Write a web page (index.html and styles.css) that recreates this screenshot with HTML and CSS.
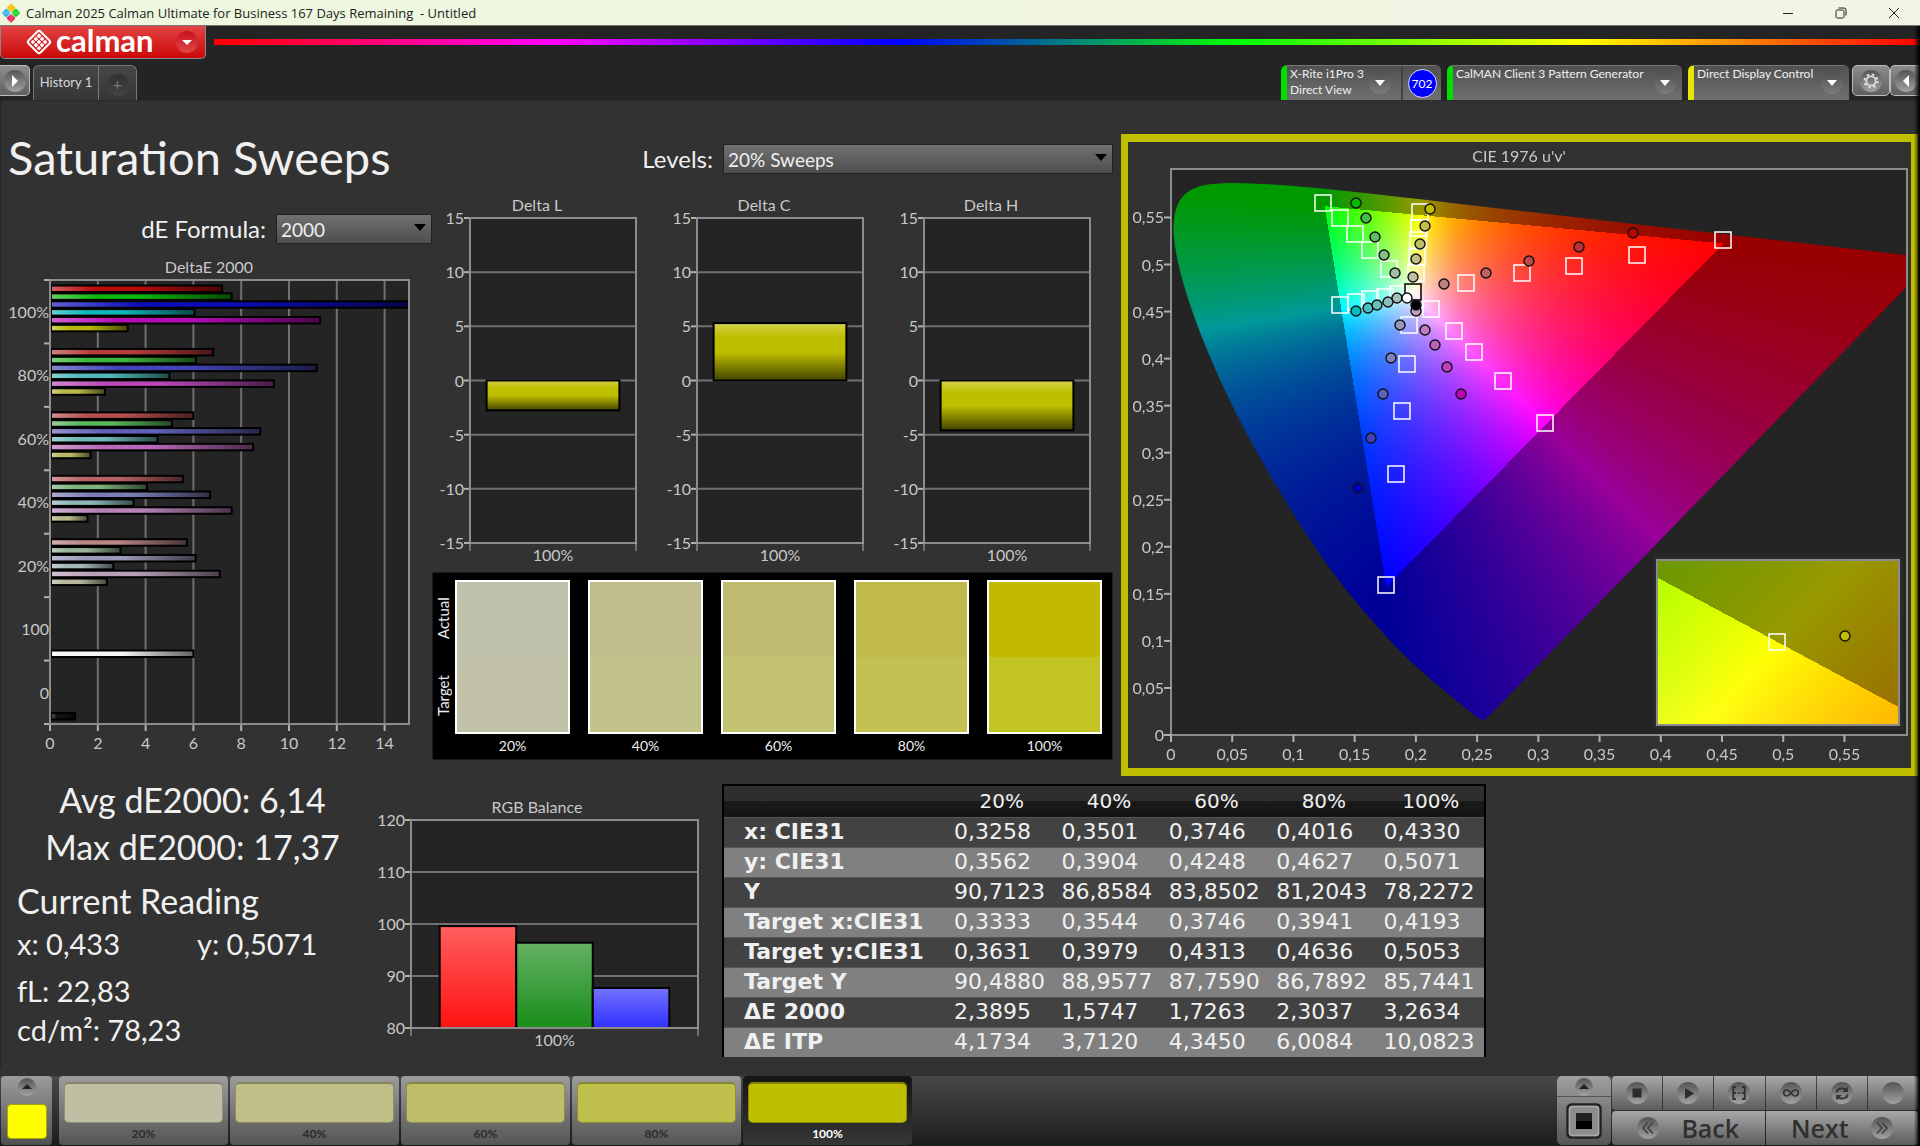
FILE: index.html
```html
<!DOCTYPE html>
<html lang="en">
<head>
<meta charset="utf-8">
<title>Calman 2025 Calman Ultimate for Business</title>
<link rel="stylesheet" href="styles.css">
</head>
<body>
<div class="app">
  <header class="titlebar">
    <svg class="app-icon" viewBox="0 0 20 20" aria-hidden="true">
      <rect x="7" y="1.5" width="6.5" height="6.5" rx="1" transform="rotate(45 10 4.8)" fill="#fdbf0f"/>
      <rect x="2" y="6.7" width="6.5" height="6.5" rx="1" transform="rotate(45 5.2 10)" fill="#39b5ef"/>
      <rect x="11.5" y="6.7" width="6.5" height="6.5" rx="1" transform="rotate(45 14.8 10)" fill="#19d52a"/>
      <rect x="6.8" y="12" width="6.5" height="6.5" rx="1" transform="rotate(45 10 15.2)" fill="#f0285a"/>
      <path d="M10 2v16M2 10h16" stroke="#fff" stroke-width=".7" opacity=".5"/>
    </svg>
    <span class="titlebar-text">Calman 2025 Calman Ultimate for Business 167 Days Remaining &nbsp;- Untitled</span>
    <div class="window-buttons">
      <button class="window-button" aria-label="Minimize"><svg viewBox="0 0 12 12"><path d="M1 6.5h10"/></svg></button>
      <button class="window-button" aria-label="Restore"><svg viewBox="0 0 12 12"><rect x="1" y="3" width="8" height="8" rx="1.5"/><path d="M3.5 1h5.5a2 2 0 0 1 2 2v5.500"/></svg></button>
      <button class="window-button" aria-label="Close"><svg viewBox="0 0 12 12"><path d="M1 1l10 10M11 1L1 11"/></svg></button>
    </div>
  </header>

  <div class="brand-row">
    <button class="brand" aria-label="Calman menu">
      <svg class="brand-mark" viewBox="0 0 28 28" aria-hidden="true">
        <g transform="rotate(45 14 14)">
          <rect x="5.500" y="5.500" width="17" height="17" rx="2.500" fill="none" stroke="#fff" stroke-width="2"/>
          <g fill="#fff">
            <rect x="8" y="8" width="3.400" height="3.400" rx=".8"/><rect x="12.300" y="8" width="3.400" height="3.400" rx=".8"/><rect x="16.600" y="8" width="3.400" height="3.400" rx=".8"/>
            <rect x="8" y="12.300" width="3.400" height="3.400" rx=".8"/><rect x="12.300" y="12.300" width="3.400" height="3.400" rx=".8"/><rect x="16.600" y="12.300" width="3.400" height="3.400" rx=".8"/>
            <rect x="8" y="16.600" width="3.400" height="3.400" rx=".8"/><rect x="12.300" y="16.600" width="3.400" height="3.400" rx=".8"/><rect x="16.600" y="16.600" width="3.400" height="3.400" rx=".8"/>
          </g>
        </g>
      </svg>
      <span class="brand-name">calman</span>
      <span class="brand-drop"><svg viewBox="0 0 22 22"><path d="M6 9h10l-5 5z" fill="#fff"/></svg></span>
    </button>
    <div class="spectrum"></div>
  </div>

  <div class="tab-row">
    <button class="square-button square-button-left" aria-label="Expand left panel"><svg viewBox="0 0 22 22"><circle cx="11" cy="11" r="11" fill="url(#knob)"/><path d="M8 5l6 6-6 6z" fill="#fff"/></svg></button>
    <div class="tabs">
      <button class="tab">History 1</button>
      <button class="tab-add" aria-label="Add tab"><span class="tab-plus">+</span></button>
    </div>
    <div class="devices">
      <div class="device device-ok">
        <button class="device-main device-meter"><span class="device-name">X-Rite i1Pro 3<br>Direct View</span><span class="device-drop"></span></button>
        <span class="device-badge-cell"><span class="device-badge">702</span></span>
      </div>
      <div class="device device-ok">
        <button class="device-main device-generator"><span class="device-name">CalMAN Client 3 Pattern Generator</span><span class="device-drop"></span></button>
      </div>
      <div class="device device-warn">
        <button class="device-main device-display"><span class="device-name">Direct Display Control</span><span class="device-drop"></span></button>
      </div>
    </div>
    <div class="square-group">
      <button class="square-button" aria-label="Settings"><svg viewBox="0 0 22 22"><circle cx="11" cy="11" r="11" fill="url(#knob)"/><circle cx="11" cy="11" r="4.600" fill="none" stroke="#ddd" stroke-width="1.800"/><circle cx="11" cy="11" r="6.500" fill="none" stroke="#ddd" stroke-width="2" stroke-dasharray="2.550 2.550"/></svg></button>
      <button class="square-button square-button-right" aria-label="Expand right panel"><svg viewBox="0 0 22 22"><circle cx="11" cy="11" r="11" fill="url(#knob)"/><path d="M14 5l-6 6 6 6z" fill="#fff"/></svg></button>
    </div>
  </div>

  <main class="workspace">
    <section class="top-grid">
      <div class="left-column">
        <h1 class="page-title">Saturation Sweeps</h1>
        <div class="field field-formula">
          <label for="formula">dE Formula:</label>
          <span class="select"><select id="formula"><option>2000</option></select></span>
        </div>
        <svg class="chart chart-deltae" id="chart-deltae" viewBox="0 0 431 500" role="img" aria-label="DeltaE 2000"></svg>
      </div>

      <div class="middle-column">
        <div class="field field-levels">
          <label for="levels">Levels:</label>
          <span class="select"><select id="levels"><option>20% Sweeps</option></select></span>
        </div>
        <div class="delta-row">
          <svg class="chart" id="chart-l" viewBox="0 0 227 378" role="img" aria-label="Delta L"></svg>
          <svg class="chart" id="chart-c" viewBox="0 0 227 378" role="img" aria-label="Delta C"></svg>
          <svg class="chart" id="chart-h" viewBox="0 0 227 378" role="img" aria-label="Delta H"></svg>
        </div>
        <div class="swatches">
          <div class="swatch-axis"><span>Actual</span><span>Target</span></div>
          <div class="swatch-list">
            <figure class="swatch"><div class="swatch-box swatch-20"></div><figcaption>20%</figcaption></figure>
            <figure class="swatch"><div class="swatch-box swatch-40"></div><figcaption>40%</figcaption></figure>
            <figure class="swatch"><div class="swatch-box swatch-60"></div><figcaption>60%</figcaption></figure>
            <figure class="swatch"><div class="swatch-box swatch-80"></div><figcaption>80%</figcaption></figure>
            <figure class="swatch"><div class="swatch-box swatch-100"></div><figcaption>100%</figcaption></figure>
          </div>
        </div>
      </div>

      <div class="cie-panel">
        <canvas class="cie-layer" id="cie-colors" width="783" height="626"></canvas>
        <svg class="cie-layer chart" id="chart-cie" viewBox="0 0 783 626" role="img" aria-label="CIE 1976 u'v'"></svg>
      </div>
    </section>

    <section class="bottom-grid">
      <div class="readings">
        <p class="reading-summary">Avg dE2000: 6,14</p>
        <p class="reading-summary">Max dE2000: 17,37</p>
        <h2 class="reading-title">Current Reading</h2>
        <div class="reading-pair"><span>x: 0,433</span><span>y: 0,5071</span></div>
        <p class="reading-line reading-first">fL: 22,83</p>
        <p class="reading-line">cd/m²: 78,23</p>
      </div>
      <svg class="chart chart-rgb" id="chart-rgb" viewBox="0 0 324 260" role="img" aria-label="RGB Balance"></svg>
      <div class="table-cell">
        <table class="data">
          <thead><tr><th class="label-column"></th><th>20%</th><th>40%</th><th>60%</th><th>80%</th><th>100%</th></tr></thead>
          <tbody>
            <tr><th>x: CIE31</th><td>0,3258</td><td>0,3501</td><td>0,3746</td><td>0,4016</td><td>0,4330</td></tr>
            <tr><th>y: CIE31</th><td>0,3562</td><td>0,3904</td><td>0,4248</td><td>0,4627</td><td>0,5071</td></tr>
            <tr><th>Y</th><td>90,7123</td><td>86,8584</td><td>83,8502</td><td>81,2043</td><td>78,2272</td></tr>
            <tr><th>Target x:CIE31</th><td>0,3333</td><td>0,3544</td><td>0,3746</td><td>0,3941</td><td>0,4193</td></tr>
            <tr><th>Target y:CIE31</th><td>0,3631</td><td>0,3979</td><td>0,4313</td><td>0,4636</td><td>0,5053</td></tr>
            <tr><th>Target Y</th><td>90,4880</td><td>88,9577</td><td>87,7590</td><td>86,7892</td><td>85,7441</td></tr>
            <tr><th>ΔE 2000</th><td>2,3895</td><td>1,5747</td><td>1,7263</td><td>2,3037</td><td>3,2634</td></tr>
            <tr><th>ΔE ITP</th><td>4,1734</td><td>3,7120</td><td>4,3450</td><td>6,0084</td><td>10,0823</td></tr>
          </tbody>
        </table>
      </div>
    </section>
  </main>

  <footer class="footer">
    <button class="pattern-picker" aria-label="Pattern color">
      <svg class="knob-small" viewBox="0 0 18 18"><circle cx="9" cy="9" r="9" fill="url(#knob)"/><path d="M4 11l5-5 5 5z" fill="#222"/></svg>
      <span class="pattern-color"></span>
    </button>
    <div class="levels">
      <button class="level"><span class="level-color level-20"></span>20%</button>
      <button class="level"><span class="level-color level-40"></span>40%</button>
      <button class="level"><span class="level-color level-60"></span>60%</button>
      <button class="level"><span class="level-color level-80"></span>80%</button>
      <button class="level level-active"><span class="level-color level-100"></span>100%</button>
    </div>
    <div class="transport">
      <div class="window-picker">
        <button class="window-up" aria-label="Show window options"><svg class="knob-small" viewBox="0 0 18 18"><circle cx="9" cy="9" r="9" fill="url(#knob)"/><path d="M4 11l5-5 5 5z" fill="#222"/></svg></button>
        <button class="window-size" aria-label="Window size"><svg viewBox="0 0 36 36"><rect x="1.500" y="1.500" width="33" height="33" rx="4" fill="#8c8c8c" stroke="#222" stroke-width="2.500"/><rect x="3.500" y="3.500" width="29" height="29" rx="3" fill="none" stroke="#aaa" stroke-width="1.500"/><rect x="10" y="10" width="16" height="16"/><rect x="10" y="10" width="16" height="8" fill="#222"/></svg></button>
      </div>
      <div class="transport-keys">
        <div class="key-row">
          <button class="key" aria-label="Stop"><svg viewBox="0 0 22 22"><circle cx="11" cy="11" r="11" fill="url(#knob)"/><rect x="6.500" y="6.500" width="9" height="9" fill="#2c2c2c"/></svg></button>
          <button class="key" aria-label="Play"><svg viewBox="0 0 22 22"><circle cx="11" cy="11" r="11" fill="url(#knob)"/><path d="M8 6l9 5.500L8 17z" fill="#2c2c2c"/></svg></button>
          <button class="key" aria-label="Read series"><svg viewBox="0 0 22 22"><circle cx="11" cy="11" r="11" fill="url(#knob)"/><path d="M8 5H5.200v12H8M14 5h2.800v12H14M5 11h3m1.500 0h1m1.200 0h1M14 11h3" fill="none" stroke="#333" stroke-width="1.800"/></svg></button>
          <button class="key" aria-label="Continuous"><svg viewBox="0 0 22 22"><circle cx="11" cy="11" r="11" fill="url(#knob)"/><path d="M11 11c-2-2.700-3.200-3-4.300-3a3 3 0 0 0 0 6c1.100 0 2.300-.3 4.300-3s3.200-3 4.300-3a3 3 0 0 1 0 6c-1.100 0-2.300-.3-4.300-3z" fill="none" stroke="#333" stroke-width="1.600"/></svg></button>
          <button class="key" aria-label="Repeat"><svg viewBox="0 0 22 22"><circle cx="11" cy="11" r="11" fill="url(#knob)"/><path d="M5.500 10.500c.3-2.600 2.500-4 5.500-4 1.500 0 2.800.4 3.800 1.300M16.500 12.500c-.3 2.600-2.500 4-5.500 4-1.500 0-2.800-.4-3.800-1.300" fill="none" stroke="#333" stroke-width="2"/><path d="M16.800 4.500v5.500h-5.500zM5.200 18.500V13h5.500z" fill="#333"/></svg></button>
          <button class="key" aria-label="Record"><svg viewBox="0 0 22 22"><circle cx="11" cy="11" r="11" fill="url(#knob)"/></svg></button>
        </div>
        <div class="key-row">
          <button class="key key-wide"><svg viewBox="0 0 22 22"><circle cx="11" cy="11" r="11" fill="url(#knob)"/><path d="M11 5.500L6 11l5 5.500M16 5.500L11 11l5 5.500" fill="none" stroke="#444" stroke-width="1.800"/></svg>Back</button>
          <button class="key key-wide">Next<svg viewBox="0 0 22 22"><circle cx="11" cy="11" r="11" fill="url(#knob)"/><path d="M6 5.500l5 5.500-5 5.500M11 5.500l5 5.500-5 5.500" fill="none" stroke="#444" stroke-width="1.800"/></svg></button>
        </div>
      </div>
    </div>
  </footer>
  <div class="edge-shadow"></div>
</div>

<svg class="definitions" aria-hidden="true">
  <defs>
    <linearGradient id="knob" x1="0" y1="0" x2="0" y2="1"><stop offset="0" stop-color="#545454"/><stop offset="1" stop-color="#a2a2a2"/></linearGradient>
    <linearGradient id="shade-x"><stop offset="0" stop-color="#fff" stop-opacity=".35"/><stop offset=".25" stop-color="#fff" stop-opacity="0"/><stop offset=".5" stop-color="#000" stop-opacity="0"/><stop offset="1" stop-color="#000" stop-opacity=".6"/></linearGradient>
    <linearGradient id="shade-y" x1="0" y1="0" x2="0" y2="1"><stop offset="0" stop-color="#fff" stop-opacity=".3"/><stop offset=".25" stop-color="#fff" stop-opacity="0"/><stop offset=".5" stop-color="#000" stop-opacity="0"/><stop offset="1" stop-color="#000" stop-opacity=".65"/></linearGradient>
    <linearGradient id="shade-light" x1="0" y1="0" x2="0" y2="1"><stop offset="0" stop-color="#fff" stop-opacity=".35"/><stop offset="1" stop-color="#fff" stop-opacity=".04"/></linearGradient>
  </defs>
</svg>
<script src="charts.js"></script>
</body>
</html>
```
FILE: styles.css
```css
* { box-sizing: border-box; }
body { margin: 0; background: #323232; color: #f0f0f0; font-family: Lato, "Open Sans", sans-serif; }
button { font: inherit; color: inherit; margin: 0; padding: 0; border: 0; background: none; }
h1, h2, p, figure { margin: 0; font-weight: 400; }
.definitions { position: absolute; width: 0; height: 0; }

.app { position: relative; display: flex; flex-direction: column; min-height: 100vh; overflow: hidden; }

/* Title bar */
.titlebar { display: flex; align-items: center; height: 26px; padding-left: 1px; background: linear-gradient(90deg, #edf8de, #f2f4e4); border-bottom: 1px solid #777; color: #222; font: 13px "Open Sans", sans-serif; }
.app-icon { width: 20px; height: 20px; margin-right: 5px; }
.titlebar-text { white-space: nowrap; }
.window-buttons { display: flex; margin-left: auto; }
.window-button { display: flex; align-items: center; justify-content: center; width: 53px; height: 25px; }
.window-button svg { width: 12px; height: 12px; fill: none; stroke: #222; stroke-width: 1; }

/* Brand and spectrum line */
.brand-row { display: flex; gap: 8px; height: 36px; background: #242424; }
.brand { display: flex; align-items: center; width: 206px; height: 33px; padding-left: 24px; border: 1px solid #888; border-top: 0; border-radius: 0 0 5px 5px; background: linear-gradient(#e24444, #cc0808); }
.brand-mark { width: 28px; height: 28px; }
.brand-name { margin-left: 3px; color: #fff; font-size: 31px; line-height: 31px; font-weight: 700; height: 35px; }
.brand-drop { width: 22px; height: 22px; margin: 0 7px 0 auto; border-radius: 50%; background: linear-gradient(#c81020, #e04848); }
.brand-drop svg { display: block; }
.spectrum { flex: 1; height: 6px; margin-top: 13px; background: linear-gradient(90deg, #f00, #f0f 20%, #00f 40%, #0f0 60%, #ff0 80%, #f00); }

/* Tabs and devices */
.tab-row { display: flex; height: 38px; padding-top: 3px; background: #242424; }
.square-button { display: flex; align-items: center; justify-content: center; width: 38px; height: 31px; border: 1px solid #bbb; border-radius: 5px; background: linear-gradient(#8c8c8c, #606060); }
.square-button svg { width: 22px; height: 22px; }
.square-button-left { width: 30px; border-left: 0; border-radius: 0 5px 5px 0; }
.square-button-right { width: 30px; border-right: 0; border-radius: 5px 0 0 5px; }
.square-group { display: flex; margin-left: 3px; }
.tabs { display: flex; margin-left: 3px; height: 35px; border: 1px solid #777; border-bottom: 0; border-radius: 6px 6px 0 0; background: linear-gradient(#474747, #363636); color: #d8d8d8; }
.tab { width: 65px; padding-bottom: 2px; font-size: 13px; border-right: 1px solid #777; }
.tab-add { display: flex; align-items: center; justify-content: center; width: 37px; }
.tab-plus { width: 22px; height: 22px; margin-top: 3px; border-radius: 50%; background: linear-gradient(#303030, #444); color: #777; font-size: 16px; line-height: 20px; }
.devices { display: flex; gap: 6px; margin-left: auto; }
.device { display: flex; height: 35px; border-top: 1px solid #777; border-left: 6px solid #0d0; border-radius: 6px 6px 0 0; background: linear-gradient(#505050, #707070); }
.device-warn { border-left-color: #e6e600; }
.device-main { display: flex; align-items: center; justify-content: space-between; padding: 0 6px 0 3px; text-align: left; font-size: 12px; line-height: 16px; }
.device-name { align-self: flex-start; white-space: nowrap; }
.device-drop { display: flex; align-items: center; justify-content: center; width: 22px; height: 22px; border-radius: 50%; background: linear-gradient(#505050, #7c7c7c); }
.device-drop::after { content: ""; border: 5px solid transparent; border-top: 6px solid #fff; border-bottom: 0; }
.device-meter { width: 114px; padding-right: 10px; }
.device-generator { width: 229px; }
.device-display { width: 155px; }
.device-badge-cell { display: flex; align-items: center; justify-content: center; width: 40px; border-left: 2px solid #444; }
.device-badge { width: 29px; height: 29px; border: 1px solid #ddf; border-radius: 50%; background: #00f; color: #fff; font-size: 12px; line-height: 27px; text-align: center; }

/* Workspace */
.workspace { flex: 1; padding-right: 2px; border-top: 1px solid #2a2a2a; border-left: 1px solid #262626; margin-bottom: 8px; }
.top-grid { display: grid; grid-template-columns: minmax(0, 431fr) minmax(0, 689fr) minmax(0, 797fr); align-items: start; }
.left-column { padding-top: 26px; }
.page-title { padding-left: 7px; font-size: 47px; line-height: 60px; white-space: nowrap; }
.field { display: flex; align-items: center; justify-content: flex-end; gap: 10px; height: 30px; font-size: 24px; }
.field-formula { margin-top: 26px; }
.select { position: relative; height: 30px; width: 156px; }
.select select { appearance: none; width: 100%; height: 100%; margin: 0; padding: 1px 4px 0; border: 1px solid #222; border-radius: 0; background: linear-gradient(#707070, #4e4e4e); color: #eee; font: 19px Lato, sans-serif; }
.select::after { content: ""; position: absolute; right: 6px; top: 11px; border: 6px solid transparent; border-top: 7px solid #000; border-bottom: 0; }
.chart { display: block; width: 100%; height: auto; }
.chart text { font-size: 16px; fill: #c8c8c8; }
.chart-deltae { margin-top: 12px; }
.middle-column { padding-top: 42px; }
.field-levels { padding-right: 8px; }
.field-levels .select { width: 390px; }
.delta-row { display: grid; grid-template-columns: repeat(3, minmax(0, 1fr)); margin-top: 19px; padding: 0 3px 0 5px; }

.swatches { display: flex; margin: 2px 8px 0 0; padding: 7px 10px 3px 0; border: 1px solid #1c1c1c; background: #000; }
.swatch-axis { display: flex; flex-direction: column; width: 22px; height: 154px; }
.swatch-axis span { flex: 1; writing-mode: vertical-rl; transform: rotate(180deg); text-align: center; font-size: 15px; line-height: 20px; color: #eee; }
.swatch-list { display: grid; flex: 1; grid-template-columns: repeat(5, minmax(0, 1fr)); column-gap: 18px; }
.swatch-box { height: 154px; border: 2px solid #fff; }
.swatch figcaption { margin-top: 2px; text-align: center; font-size: 14px; line-height: 20px; color: #eee; }
.swatch-20 { background: linear-gradient(#bec1ac 50%, #c1c1a8 50%); }
.swatch-40 { background: linear-gradient(#c1be8d 50%, #c2c28b 50%); }
.swatch-60 { background: linear-gradient(#bfbb70 50%, #c2c270 50%); }
.swatch-80 { background: linear-gradient(#bfba4a 50%, #c1c251 50%); }
.swatch-100 { background: linear-gradient(#c2b900 50%, #c2c424 50%); }

.cie-panel { display: grid; margin-top: 33px; border: 8px solid #bfbf00; border-width: 8px 7px; }
.cie-layer { grid-area: 1 / 1; display: block; width: 100%; height: auto; }

/* Lower row */
.bottom-grid { display: grid; grid-template-columns: minmax(0, 374fr) minmax(0, 324fr) minmax(0, 787fr) minmax(0, 432fr); align-items: start; }
.readings { padding-left: 16px; white-space: nowrap; }
.reading-summary { text-align: center; font-size: 34px; line-height: 47px; }
.readings .reading-summary { width: 351px; }
.reading-title { margin-top: 8px; font-size: 34px; line-height: 46px; }
.reading-pair { display: grid; grid-template-columns: 180px 1fr; font-size: 29px; line-height: 39px; }
.reading-line { font-size: 29px; line-height: 39px; }
.reading-first { margin-top: 8px; }
.chart-rgb { margin-top: 19px; }
.table-cell { padding: 8px 0 0 23px; }
.data { width: 100%; table-layout: fixed; border-collapse: collapse; border: 2px solid #000; border-bottom: 0; font: 22px/28px "DejaVu Sans", sans-serif; color: #f0f0f0; }
.data th, .data td { height: 30px; padding: 0 0 0 6px; text-align: left; font-weight: 400; white-space: nowrap; }
.data tbody th { padding-left: 20px; font-weight: 700; }
.data .label-column { width: 225px; }
.data thead th { height: 32px; padding: 0; text-align: center; font-size: 20px; }
.data thead tr { background: linear-gradient(#2e2e2e 50%, #1a1a1a 50%, #141414); }
.data tbody tr { background: #424242; border-top: 1px solid #555; }
.data tbody tr:nth-child(even) { background: #808080; }

/* Footer */
.footer { display: flex; height: 70px; padding: 0 2px 1px 1px; background: linear-gradient(#484848, #1c1c1c); }
.pattern-picker { display: flex; flex-direction: column; align-items: center; width: 51px; padding-top: 2px; border-radius: 4px; background: linear-gradient(#9c9c9c, #505050); }
.knob-small { width: 18px; height: 18px; display: block; }
.pattern-color { width: 40px; height: 35px; margin-top: 8px; border: 1px solid #a5a500; border-radius: 4px; background: #ff0; }
.levels { display: flex; gap: 2px; margin-left: 7px; }
.level { display: flex; flex-direction: column; width: 169px; padding: 6px 5px 0; border-radius: 4px; background: linear-gradient(#9c9c9c, #555); color: #2b2b2b; font-size: 12px; line-height: 22px; font-weight: 700; align-items: stretch; text-align: center; }
.level-color { flex: none; height: 41px; border: 1px solid rgba(0, 0, 0, .25); border-top: 2px solid rgba(0, 0, 0, .3); border-radius: 5px; }
.level-20 { background-color: #bfbfa4; }
.level-40 { background-color: #bfbf87; }
.level-60 { background-color: #bfbf6a; }
.level-80 { background-color: #bfbf4b; }
.level-100 { background-color: #bfbf00; }
.level-active { background: linear-gradient(#151515, #363636); color: #fff; }
.transport { display: flex; gap: 1px; margin-left: auto; }
.window-picker { display: flex; flex-direction: column; width: 54px; border-radius: 5px; overflow: hidden; background: linear-gradient(#a0a0a0, #555); }
.window-up { display: flex; justify-content: center; height: 21px; padding-top: 2px; border-bottom: 1px solid #555; }
.window-size { display: flex; align-items: center; justify-content: center; flex: 1; }
.window-size svg { width: 36px; height: 36px; }
.transport-keys { display: flex; flex-direction: column; gap: 1px; width: 306px; }
.key-row { display: flex; flex: 1; gap: 1px; border-radius: 4px; overflow: hidden; }
.key { display: flex; flex: 1; align-items: center; justify-content: center; background: linear-gradient(#a8a8a8, #5c5c5c); }
.key svg { width: 22px; height: 22px; }
.key-wide { gap: 22px; color: #303030; font: 600 25px/30px "Open Sans", sans-serif; }
.edge-shadow { position: absolute; top: 26px; right: 0; bottom: 0; width: 6px; background: linear-gradient(90deg, rgba(0, 0, 0, 0), #000); pointer-events: none; }
```
FILE: charts.js
```js
const NS = 'http://www.w3.org/2000/svg';

function add(parent, tag, attrs, text) {
  const el = document.createElementNS(NS, tag);
  for (const k in attrs) el.setAttribute(k, attrs[k]);
  if (text !== undefined) el.textContent = text;
  parent.appendChild(el);
  return el;
}
function line(svg, x1, y1, x2, y2, stroke, width) {
  add(svg, 'line', { x1, y1, x2, y2, stroke, 'stroke-width': width || 2 });
}
function label(svg, x, y, text, anchor) {
  add(svg, 'text', { x, y, 'text-anchor': anchor || 'middle' }, text);
}
function bar(svg, x, y, width, height, color, shade) {
  add(svg, 'rect', { x, y, width, height, fill: color });
  add(svg, 'rect', { x, y, width, height, fill: `url(#${shade})`, stroke: '#000', 'stroke-width': 2 });
}
function frame(svg, x, y, width, height) {
  add(svg, 'rect', { x, y, width, height, fill: 'none', stroke: '#8c8c8c', 'stroke-width': 2 });
}
const GRID = '#707070', TICK = '#b0b0b0';

/* DeltaE 2000 horizontal bars */
(function () {
  const svg = document.getElementById('chart-deltae');
  const x0 = 49, y0 = 25, w = 359, h = 444, unit = 23.9, step = h / 7;
  const groups = [
    ['100%', [7.2, 7.6, 15, 6.05, 11.3, 3.25], ['#b80c0c', '#0cb80c', '#0c0cb8', '#0cb8b8', '#b80cb8', '#b8b80c']],
    ['80%', [6.83, 6.1, 11.16, 5, 9.37, 2.3], ['#b83c3c', '#3cb83c', '#4444b8', '#50b8b8', '#b848b8', '#b8b848']],
    ['60%', [6, 5.1, 8.8, 4.5, 8.5, 1.7], ['#b85050', '#5cb85c', '#6060b8', '#70b8b8', '#b868b8', '#b8b868']],
    ['40%', [5.56, 4.06, 6.7, 3.5, 7.6, 1.57], ['#b86464', '#7cb47c', '#7c7cb8', '#8cb8b8', '#b884b8', '#b8b888']],
    ['20%', [5.73, 2.95, 6.1, 2.65, 7.1, 2.38], ['#b88484', '#98b498', '#9898b8', '#a4b8b8', '#b8a0b8', '#b8b8a0']]
  ];
  label(svg, 208, 18, 'DeltaE 2000');
  add(svg, 'rect', { x: x0, y: y0, width: w, height: h, fill: '#242424' });
  for (let v = 0; v <= 14; v += 2) {
    const x = x0 + v * unit;
    line(svg, x, y0, x, y0 + h, GRID);
    line(svg, x, y0 + h, x, y0 + h + 7, TICK);
    label(svg, x, y0 + h + 25, String(v));
  }
  for (let i = 0; i <= 7; i++) line(svg, x0 - 6, y0 + i * step, x0, y0 + i * step, TICK);
  groups.forEach(([name, values, colors], g) => {
    label(svg, x0 - 1, y0 + g * step + 38, name, 'end');
    values.forEach((v, i) => bar(svg, x0 + 1, y0 + g * step + 5.5 + i * 7.87, Math.min(v * unit, w) - 1, 6.5, colors[i], 'shade-x'));
  });
  label(svg, x0 - 1, y0 + 5 * step + 38, '100', 'end');
  label(svg, x0 - 1, y0 + 6 * step + 38, '0', 'end');
  bar(svg, x0 + 1, y0 + 370.500, 6 * unit - 1, 6.5, '#f4f4f4', 'shade-x');
  bar(svg, x0 + 1, y0 + 433, 1.05 * unit - 1, 6.5, '#101010', 'shade-x');
  frame(svg, x0, y0, w, h);
})();

/* Vertical charts: Delta L, C, H and RGB balance */
function vertical(id, o) {
  const svg = document.getElementById(id);
  const pos = v => o.y + (o.max - v) * o.h / (o.max - o.min);
  label(svg, o.titleX, o.y - 7, o.title);
  add(svg, 'rect', { x: o.x, y: o.y, width: o.w, height: o.h, fill: '#242424' });
  for (let v = o.max; v >= o.min; v -= o.step) {
    line(svg, o.x, pos(v), o.x + o.w, pos(v), GRID);
    line(svg, o.x - 6, pos(v), o.x, pos(v), TICK);
    label(svg, o.x - 6, pos(v) + 6, String(v), 'end');
  }
  o.bars.forEach(([v, color], i) => {
    const top = pos(Math.max(v, o.base)), bottom = pos(Math.min(v, o.base));
    const width = o.w * 0.8 / o.bars.length;
    bar(svg, o.x + o.w * 0.1 + i * width, top, width, bottom - top, color, o.shade);
  });
  frame(svg, o.x, o.y, o.w, o.h);
  line(svg, o.x, o.y + o.h, o.x, o.y + o.h + 8, TICK, 1);
  line(svg, o.x + o.w, o.y + o.h, o.x + o.w, o.y + o.h + 8, TICK, 1);
  label(svg, o.x + o.w / 2, o.y + o.h + 18, '100%');
}
[['l', -2.75], ['c', 5.3], ['h', -4.6]].forEach(([k, v]) => vertical('chart-' + k, {
  title: 'Delta ' + k.toUpperCase(), titleX: 100, x: 33, y: 26, w: 166, h: 325,
  max: 15, min: -15, step: 5, base: 0, bars: [[v, '#bfbf00']], shade: 'shade-y'
}));
vertical('chart-rgb', {
  title: 'RGB Balance', titleX: 162, x: 36, y: 25, w: 287, h: 208, max: 120, min: 80, step: 10, base: 80,
  bars: [[99.6, '#ff0808'], [96.4, '#108810'], [87.7, '#2828ff']], shade: 'shade-light'
});

/* CIE 1976 chromaticity chart */
(function () {
  const svg = document.getElementById('chart-cie');
  const ctx = document.getElementById('cie-colors').getContext('2d');
  const px = 43, py = 27, pw = 736, ph = 566, su = 1224.5, sv = 941;
  const X = u => px + u * su, Y = v => py + ph - v * sv;
  const num = v => String(Math.round(v * 100) / 100).replace('.', ',');

  /* Rec. 709 colour of a chromaticity, dimmed outside the gamut */
  function rgb(x, y) {
    const a = x / y, c = (1 - x - y) / y;
    const lin = [3.2406 * a - 1.5372 - 0.4986 * c, -0.9689 * a + 1.8758 + 0.0415 * c, 0.0557 * a - 0.204 + 1.057 * c];
    const k = Math.min(...lin) < 0 ? 153 : 255, m = Math.max(...lin);
    return lin.map(n => k * Math.max(n, 0) / m);
  }
  function paint(x0, y0, w, h, toXY) {
    const layer = document.createElement('canvas');
    layer.width = w; layer.height = h;
    const lc = layer.getContext('2d'), img = lc.createImageData(w, h);
    for (let j = 0; j < h; j++) for (let i = 0; i < w; i++) {
      const [x, y] = toXY(x0 + i, y0 + j), p = (j * w + i) * 4;
      const c = rgb(x, Math.max(y, 0.001));
      img.data[p] = c[0]; img.data[p + 1] = c[1]; img.data[p + 2] = c[2]; img.data[p + 3] = 255;
    }
    lc.putImageData(img, 0, 0);
    ctx.drawImage(layer, x0, y0);
  }

  const locus = [[.1741, .005], [.1726, .0048], [.1714, .0051], [.1689, .0069], [.1644, .0109], [.1566, .0177], [.144, .0297],
    [.1241, .0578], [.1096, .0868], [.0913, .1327], [.0687, .2007], [.0454, .295], [.0235, .4127], [.0082, .5384], [.0039, .6548],
    [.0139, .7502], [.0389, .812], [.0743, .8338], [.1142, .8262], [.1547, .8059], [.2296, .7543], [.3016, .6923], [.3731, .6245],
    [.4441, .5547], [.5125, .4866], [.5752, .4242], [.627, .3725], [.6658, .334], [.6915, .3083], [.719, .2809], [.7347, .2653]]
    .map(([x, y]) => { const d = -2 * x + 12 * y + 3; return [X(4 * x / d), Y(9 * y / d)]; });

  ctx.fillStyle = '#242424';
  ctx.fillRect(px, py, pw, ph);
  ctx.save();
  ctx.beginPath(); ctx.rect(px, py, pw, ph); ctx.clip();
  ctx.beginPath();
  ctx.moveTo(...locus[0]);
  for (let i = 1; i < locus.length - 1; i++) {
    const [ax, ay] = locus[i], [bx, by] = locus[i + 1];
    ctx.quadraticCurveTo(ax, ay, (ax + bx) / 2, (ay + by) / 2);
  }
  ctx.lineTo(...locus[locus.length - 1]);
  ctx.closePath();
  ctx.clip();
  paint(px, py, pw, ph, (i, j) => {
    const u = (i - px) / su, v = (py + ph - j) / sv, d = 6 * u - 16 * v + 12;
    return [9 * u / d, 4 * v / d];
  });
  ctx.restore();

  label(svg, 391, 20, "CIE 1976 u'v'");
  frame(svg, px, py, pw, ph);
  for (let n = 0; n <= 11; n++) {
    const v = n * 0.05;
    line(svg, X(v), py + ph, X(v), py + ph + 7, TICK);
    label(svg, X(v), py + ph + 25, num(v));
    line(svg, px - 7, Y(v), px, Y(v), TICK);
    label(svg, px - 7, Y(v) + 6, num(v), 'end');
  }

  const square = (x, y, stroke) => add(svg, 'rect', { x: x - 8, y: y - 8, width: 16, height: 16, fill: 'none', stroke: stroke || '#fff', 'stroke-width': 1.5 });
  const dot = (x, y, fill) => add(svg, 'circle', { cx: x, cy: y, r: 5, fill, stroke: '#111', 'stroke-width': 1.4 });
  [[195, 61], [212, 76], [227, 92], [242, 108], [261, 127], [292, 70], [291, 86], [290, 98], [289, 115], [288, 131],
    [212, 163], [228, 160], [242, 157], [257, 155], [270, 152], [338, 141], [394, 131], [446, 124], [509, 113], [595, 98],
    [303, 167], [326, 189], [346, 210], [375, 239], [417, 281], [281, 183], [279, 222], [274, 269], [268, 332], [258, 443]]
    .forEach(([x, y]) => square(x, y));
  square(285, 150, '#000');
  [[228, 61, '#00bf00'], [238, 76, '#40bf40'], [247, 95, '#60bf60'], [256, 113, '#80bf80'], [267, 131, '#a0bfa0'],
    [302, 67, '#bfbf00'], [297, 84, '#bfbf4b'], [292, 102, '#bfbf6a'], [288, 117, '#bfbf87'], [285, 135, '#bfbfa4'],
    [228, 169, '#00bfbf'], [240, 166, '#4bbfbf'], [249, 163, '#6abfbf'], [260, 160, '#87bfbf'], [269, 156, '#a4bfbf'],
    [288, 169, '#bfa0bf'], [297, 188, '#bf80bf'], [307, 203, '#bf60bf'], [319, 225, '#bf40bf'], [333, 252, '#bf00bf'],
    [316, 142, '#bf8080'], [358, 131, '#bf6060'], [401, 119, '#bf4848'], [451, 105, '#bf3030'], [505, 91, '#bf0000'],
    [272, 183, '#9898bf'], [263, 216, '#8080bf'], [255, 252, '#6060bf'], [243, 296, '#4040bf'], [230, 346, '#0000bf'],
    [279, 156, '#fff'], [288, 163, '#000']]
    .forEach(([x, y, c]) => dot(x, y, c));

  /* Zoomed inset around the selected target, in x,y coordinates */
  ctx.fillStyle = '#2c2c2c';
  ctx.fillRect(526, 415, 249, 172);
  paint(529, 418, 242, 165, (i, j) => [0.4193 + (i - 650) / 4960, 0.5053 - (j - 500) / 3350]);
  frame(svg, 529, 418, 242, 165);
  square(649, 500);
  dot(717, 494, '#bfbf00');
})();
```
